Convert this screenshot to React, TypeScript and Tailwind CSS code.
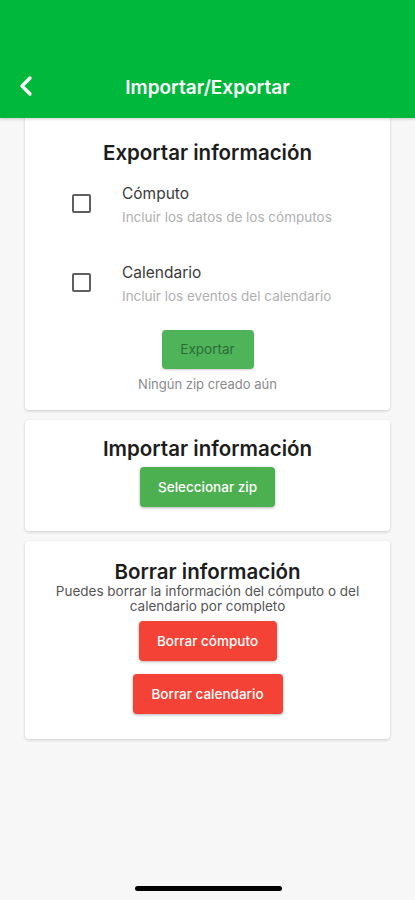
import { ChevronLeft } from "lucide-react";

function Casilla({ titulo, detalle }: { titulo: string; detalle: string }) {
  return (
    <div className="flex items-start">
      <div className="w-[97px] flex justify-end pr-[31px] pt-[10px]">
        <div className="w-[19px] h-[19px] border-2 border-[#5f5f5f] rounded-[2px]" />
      </div>
      <div className="flex flex-col">
        <span className="text-[15.5px] leading-[20px] text-[#3a3a3a]">{titulo}</span>
        <span className="text-[13.5px] leading-[18px] mt-[4px] text-[#b0b0b0]">{detalle}</span>
      </div>
    </div>
  );
}

export default function App() {
  return (
    <div className="relative w-[415px] h-[900px] bg-[#f7f7f7] overflow-hidden font-['Inter',sans-serif]">
      <div className="relative z-10 h-[118px] bg-[#00b83c] flex items-end pb-[15px] shadow-[0_1px_3px_rgba(0,0,0,0.2)]">
        <ChevronLeft className="absolute left-[10px] bottom-[16px] text-white" size={32} strokeWidth={2.5} />
        <h1 className="w-full text-center text-white text-[19px] font-semibold leading-[30px]">
          Importar/Exportar
        </h1>
      </div>

      <div className="flex flex-col gap-[10px] px-[25px] -mt-[4px]">
        <div className="bg-white rounded-[4px] shadow-[0_1px_3px_rgba(0,0,0,0.18)] pt-[27px] pb-[17px] flex flex-col">
          <h2 className="text-center text-[20.5px] font-semibold leading-[24px] text-[#1d1d1d]">
            Exportar información
          </h2>
          <div className="mt-[19px] flex flex-col gap-[37px]">
            <Casilla titulo="Cómputo" detalle="Incluir los datos de los cómputos" />
            <Casilla titulo="Calendario" detalle="Incluir los eventos del calendario" />
          </div>
          <div className="flex justify-center mt-[25px]">
            <button className="w-[92px] h-[39px] rounded-[4px] bg-[#4fb35a] text-[#2b6e34] text-[13.5px] shadow-[0_1px_2px_rgba(0,0,0,0.2)]">
              Exportar
            </button>
          </div>
          <p className="text-center text-[13px] text-[#8a8a8a] mt-[6px] leading-[18px]">
            Ningún zip creado aún
          </p>
        </div>

        <div className="bg-white rounded-[4px] shadow-[0_1px_3px_rgba(0,0,0,0.18)] pt-[17px] pb-[24px] flex flex-col items-center">
          <h2 className="text-center text-[20.5px] font-semibold leading-[24px] text-[#1d1d1d]">
            Importar información
          </h2>
          <button className="mt-[6px] w-[135px] h-[40px] rounded-[4px] bg-[#4caf50] text-white text-[13.5px] font-medium shadow-[0_1px_3px_rgba(0,0,0,0.3)]">
            Seleccionar zip
          </button>
        </div>

        <div className="bg-white rounded-[4px] shadow-[0_1px_3px_rgba(0,0,0,0.18)] pt-[19px] pb-[25px] flex flex-col items-center">
          <h2 className="text-center text-[20.5px] font-semibold leading-[24px] text-[#1d1d1d]">
            Borrar información
          </h2>
          <p className="text-center text-[13.5px] leading-[15px] text-[#555] px-[20px]">
            Puedes borrar la información del cómputo o del calendario por completo
          </p>
          <button className="mt-[7px] w-[138px] h-[40px] rounded-[4px] bg-[#f44336] text-white text-[13.5px] font-medium shadow-[0_1px_3px_rgba(0,0,0,0.3)]">
            Borrar cómputo
          </button>
          <button className="mt-[13px] w-[150px] h-[40px] rounded-[4px] bg-[#f44336] text-white text-[13.5px] font-medium shadow-[0_1px_3px_rgba(0,0,0,0.3)]">
            Borrar calendario
          </button>
        </div>
      </div>

      <div className="absolute bottom-[9px] left-[135px] w-[147px] h-[5px] rounded-full bg-black" />
    </div>
  );
}
